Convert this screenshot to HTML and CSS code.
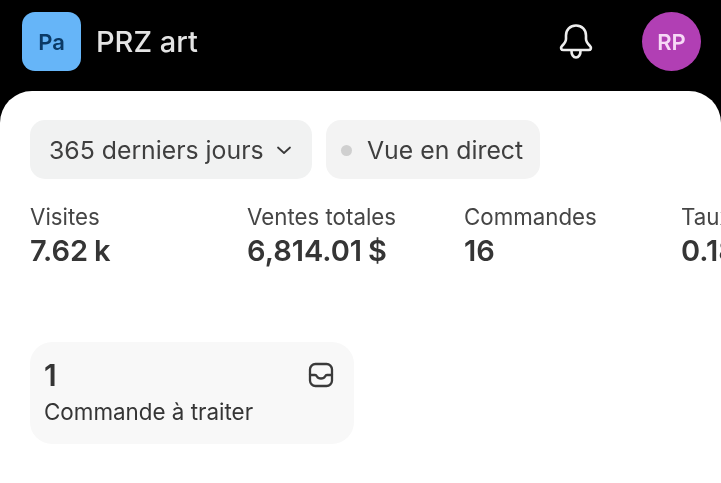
FILE: index.html
```html
<!DOCTYPE html>
<html lang="fr">
<head>
<meta charset="utf-8">
<title>PRZ art</title>
<link rel="stylesheet" href="styles.css">
</head>
<body>
<div class="screen">
<header class="topbar">
  <div class="store">
    <div class="store-badge">Pa</div>
    <div class="store-name">PRZ art</div>
  </div>
  <div class="actions">
    <svg class="bell" width="38" height="38" viewBox="0 0 38 38" fill="none" stroke="#eeeeee" stroke-width="2.600" stroke-linecap="round" stroke-linejoin="round">
      <path d="M19 2.500c-6 0-10 4.500-10 10v3.500c0 2.500-1.500 4.500-4 7-1.800 1.800-1 4 1.500 4h25c2.500 0 3.300-2.200 1.500-4-2.500-2.500-4-4.500-4-7v-3.500c0-5.500-4-10-10-10z"/>
      <path d="M14.500 27.500c-.2 4 1.800 7 4.500 7s4.700-3 4.500-7"/>
    </svg>
    <div class="avatar">RP</div>
  </div>
</header>
<main class="sheet">
  <div class="filters">
    <div class="pill pill-range">
      <span>365 derniers jours</span>
      <svg class="chevron" width="16" height="16" viewBox="0 0 16 16" fill="none" stroke="#3a3a3a" stroke-width="1.800" stroke-linecap="round" stroke-linejoin="round"><path d="M2 5.500 8 11l6-5.500"/></svg>
    </div>
    <div class="pill pill-live">
      <span class="dot"></span>
      <span>Vue en direct</span>
    </div>
  </div>
  <div class="metrics">
    <div class="metric"><div class="metric-label">Visites</div><div class="metric-value">7.62 k</div></div>
    <div class="metric"><div class="metric-label">Ventes totales</div><div class="metric-value">6,814.01 $</div></div>
    <div class="metric"><div class="metric-label">Commandes</div><div class="metric-value">16</div></div>
    <div class="metric"><div class="metric-label">Taux de conversion</div><div class="metric-value">0.18 %</div></div>
  </div>
  <section class="task">
    <div class="task-top">
      <div class="task-count">1</div>
      <svg class="inbox" width="26" height="26" viewBox="0 0 26 26" fill="none" stroke="#3a3a3a" stroke-width="2.300" stroke-linecap="round" stroke-linejoin="round">
        <rect x="2" y="2" width="22" height="22" rx="5.500"/>
        <path d="M2 13h5c1 0 1.500.5 2 1.500.6 1.200 2.100 2 4 2s3.400-.8 4-2c.5-1 1-1.500 2-1.500h5"/>
      </svg>
    </div>
    <div class="task-label">Commande à traiter</div>
  </section>
</main>
</div>
</body>
</html>
```
FILE: styles.css
```css
* { box-sizing: border-box; }
html, body { margin: 0; height: 100%; background: #000; }
body { overflow: hidden; }
.screen {
  width: 721px;
  height: 483px;
  overflow: hidden;
  background: #000;
  font-family: Inter, "Liberation Sans", sans-serif;
  color: #303030;
  filter: blur(0.45px);
}
.topbar {
  height: 91px;
  padding: 12px 20px 20px 22px;
  display: flex;
  align-items: flex-start;
  justify-content: space-between;
}
.store { display: flex; align-items: center; gap: 15px; }
.store-badge {
  width: 59px;
  height: 59px;
  border-radius: 13px;
  background: #66b5f8;
  color: #0b3a66;
  font-size: 22px;
  font-weight: 600;
  display: flex;
  align-items: center;
  justify-content: center;
}
.store-name { color: #e4e4e4; font-size: 29px; font-weight: 500; }
.actions { display: flex; align-items: center; gap: 47px; }
.bell { display: block; }
.avatar {
  width: 59px;
  height: 59px;
  border-radius: 50%;
  background: #b13fb4;
  color: #f6d9f6;
  font-size: 22px;
  font-weight: 600;
  display: flex;
  align-items: center;
  justify-content: center;
}
.sheet {
  height: 392px;
  padding: 29px 0 0 30px;
  background: #fff;
  border-radius: 32px 32px 0 0;
  overflow: hidden;
}
.filters { display: flex; gap: 14px; }
.pill {
  height: 59px;
  border-radius: 15px;
  background: #f1f2f2;
  display: flex;
  align-items: center;
  padding-top: 1px;
  font-size: 24.800px;
  color: #3f3f3f;
}
.pill-range { width: 282px; padding-left: 19px; gap: 12px; }
.pill-live { width: 214px; padding-left: 15px; gap: 15px; background: #f3f3f3; }
.dot { width: 11px; height: 11px; border-radius: 50%; background: #cfcfcf; }
.metrics { display: flex; margin-top: 25px; }
.metric { flex: 0 0 217px; white-space: nowrap; }
.metric-label { font-size: 22.300px; line-height: 26px; color: #454545; }
.metric-value { margin-top: 4px; font-size: 29px; line-height: 34px; font-weight: 600; color: #353535; word-spacing: -1.500px; }
.task {
  width: 324px;
  height: 102px;
  margin-top: 74px;
  padding: 16px 20px 0 14px;
  border-radius: 22px;
  background: #f8f8f8;
}
.task-top { display: flex; justify-content: space-between; align-items: center; height: 34px; }
.task-count { font-size: 30px; font-weight: 600; color: #353535; }
.inbox { display: block; }
.task-label { margin-top: 6px; font-size: 22.400px; line-height: 28px; color: #353535; }
```
